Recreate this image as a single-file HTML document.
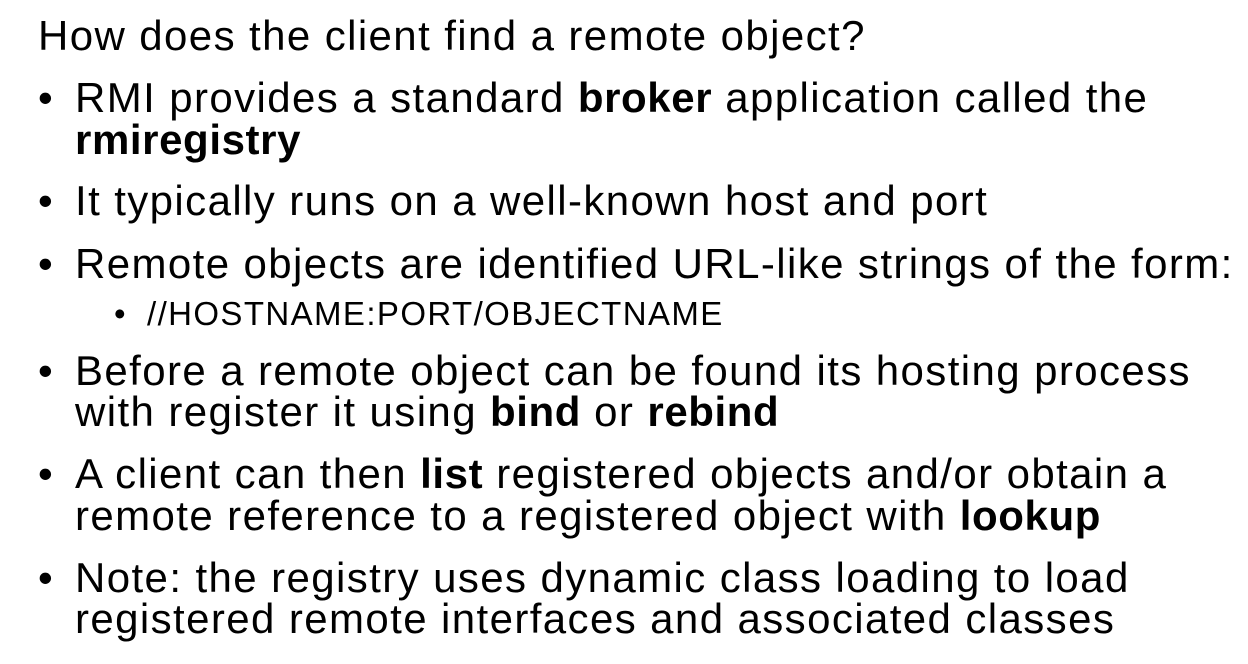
<!DOCTYPE html>
<html><head><meta charset="utf-8"><style>
body{margin:0;width:1248px;height:664px;background:#fff;overflow:hidden;font-family:"Liberation Sans",Arial,sans-serif;color:#000}
.l{position:absolute;font-size:42px;line-height:42px;white-space:nowrap;letter-spacing:1.4px}
.s{font-size:33px;line-height:33px;letter-spacing:1.4px}
b{font-weight:bold;letter-spacing:0.6px}
</style></head><body>
<div class="l" style="left:38px;top:15px">How does the client find a remote object?</div>
<div class="l" style="left:38px;top:77px">•</div>
<div class="l" style="left:75px;top:77px">RMI provides a standard <b>broker</b> application called the</div>
<div class="l" style="left:75px;top:119px"><b>rmiregistry</b></div>
<div class="l" style="left:38px;top:180px">•</div>
<div class="l" style="left:75px;top:180px">It typically runs on a well-known host and port</div>
<div class="l" style="left:38px;top:243px">•</div>
<div class="l" style="left:75px;top:243px">Remote objects are identified URL-like strings of the form:</div>
<div class="l s" style="left:114px;top:297px;letter-spacing:0">•</div>
<div class="l s" style="left:147px;top:297px">//HOSTNAME:PORT/OBJECTNAME</div>
<div class="l" style="left:38px;top:350px">•</div>
<div class="l" style="left:75px;top:350px">Before a remote object can be found its hosting process</div>
<div class="l" style="left:75px;top:391px">with register it using <b>bind</b> or <b>rebind</b></div>
<div class="l" style="left:38px;top:453px">•</div>
<div class="l" style="left:75px;top:453px">A client can then <b>list</b> registered objects and/or obtain a</div>
<div class="l" style="left:75px;top:495px">remote reference to a registered object with <b>lookup</b></div>
<div class="l" style="left:38px;top:557px">•</div>
<div class="l" style="left:75px;top:557px">Note: the registry uses dynamic class loading to load</div>
<div class="l" style="left:75px;top:598px">registered remote interfaces and associated classes</div>
</body></html>
